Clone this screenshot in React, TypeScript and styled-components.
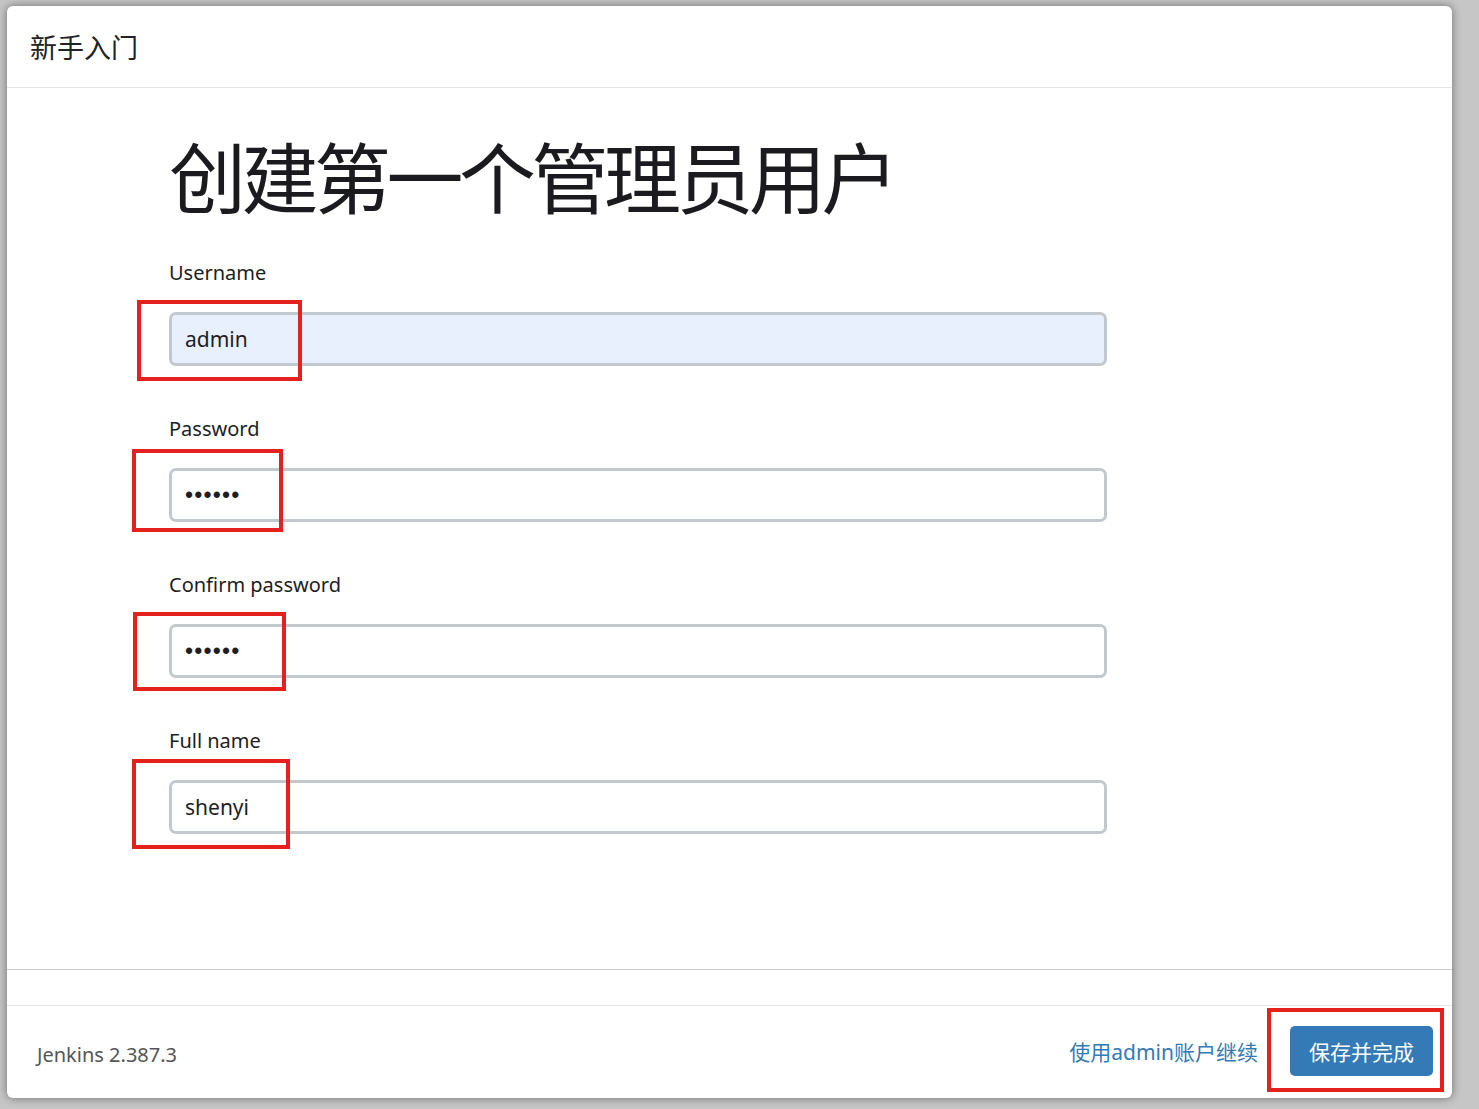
import React from 'react'
import styled, { createGlobalStyle } from 'styled-components'

const fields = [
  { label: 'Username', type: 'text', value: 'admin', autofill: true },
  { label: 'Password', type: 'password', value: '123456', autofill: false },
  { label: 'Confirm password', type: 'password', value: '123456', autofill: false },
  { label: 'Full name', type: 'text', value: 'shenyi', autofill: false },
]

// red marker boxes drawn over the screenshot
const marks = [
  { left: 137, top: 300, width: 165, height: 81 },
  { left: 132, top: 449, width: 151, height: 83 },
  { left: 133, top: 612, width: 153, height: 79 },
  { left: 132, top: 759, width: 158, height: 90 },
  { left: 1267, top: 1008, width: 177, height: 84 },
]

export default function App() {
  return (
    <Page>
      <GlobalStyle />
      <Dialog>
        <Header>新手入门</Header>
        <Body>
          <Form>
            <Title>创建第一个管理员用户</Title>
            {fields.map((f) => (
              <Group key={f.label}>
                <Label>{f.label}</Label>
                <Input type={f.type} defaultValue={f.value} readOnly $autofill={f.autofill} />
              </Group>
            ))}
          </Form>
        </Body>
        <Spacer />
        <Footer>
          <Version>Jenkins 2.387.3</Version>
          <Actions>
            <SkipLink href="#">使用admin账户继续</SkipLink>
            <SaveButton>保存并完成</SaveButton>
          </Actions>
        </Footer>
      </Dialog>
      {marks.map((m, i) => (
        <Mark key={i} style={{ left: m.left, top: m.top, width: m.width, height: m.height }} />
      ))}
    </Page>
  )
}

const GlobalStyle = createGlobalStyle`
  html, body {
    margin: 0;
    padding: 0;
    background: #c6c6c6;
  }
  * {
    box-sizing: border-box;
  }
`

const font = `"Noto Sans", "Noto Sans CJK SC", sans-serif`

const Page = styled.div`
  position: relative;
  width: 1479px;
  height: 1109px;
  padding: 6px 27px 11px 7px;
  background: #c6c6c6;
  font-family: ${font};
  color: #222;
`

const Dialog = styled.div`
  display: flex;
  flex-direction: column;
  width: 1445px;
  height: 1092px;
  background: #fff;
  border-radius: 6px;
  box-shadow: 0 0 10px rgba(0, 0, 0, 0.45);
  overflow: hidden;
`

const Header = styled.div`
  display: flex;
  align-items: center;
  height: 82px;
  padding: 0 23px;
  border-bottom: 1px solid #e5e5e5;
  font-size: 27px;
  color: #222;
  font-family: "Noto Sans CJK SC", sans-serif;
`

const Body = styled.div`
  flex: 1;
  border-bottom: 1px solid #cfcfcf;
`

const Form = styled.div`
  width: 938px;
  margin-left: 162px;
  padding-top: 45px;
`

const Title = styled.h1`
  margin: 0 0 41px;
  font-family: "Noto Sans CJK SC", sans-serif;
  font-size: 77px;
  font-weight: 400;
  letter-spacing: -4.5px;
  line-height: 84px;
  color: #1b1b1f;
`

const Group = styled.div`
  margin-bottom: 48px;
`

const Label = styled.div`
  font-size: 20px;
  line-height: 30px;
  margin-bottom: 24px;
  color: #1d1d22;
`

const Input = styled.input<{ $autofill: boolean }>`
  display: block;
  width: 100%;
  height: 54px;
  padding: 0 13px;
  border: 3px solid #c1c8ce;
  border-radius: 7px;
  background: ${({ $autofill }) => ($autofill ? '#e8f0fe' : '#fff')};
  font-family: ${font};
  font-size: 21px;
  color: #1d1d22;
  outline: none;

  &[type='password'] {
    font-family: "Liberation Sans", sans-serif;
    font-size: 23px;
    letter-spacing: 1.2px;
  }
`

const Spacer = styled.div`
  height: 36px;
  border-bottom: 1px solid #e5e5e5;
`

const Footer = styled.div`
  display: flex;
  align-items: center;
  justify-content: space-between;
  flex: 0 0 92px;
  padding: 4px 19px 0 30px;
`

const Version = styled.span`
  font-size: 20px;
  color: #555;
`

const Actions = styled.div`
  display: flex;
  align-items: center;
  gap: 32px;
  margin-top: -6px;
`

const SkipLink = styled.a`
  font-family: ${font};
  font-size: 21px;
  color: #337ab7;
  text-decoration: none;
`

const SaveButton = styled.button`
  width: 143px;
  height: 50px;
  border: none;
  border-radius: 5px;
  background: #337ab7;
  color: #fff;
  font-family: "Noto Sans CJK SC", sans-serif;
  font-size: 21px;
`

const Mark = styled.div`
  position: absolute;
  border: 4px solid #e3211f;
  pointer-events: none;
`
